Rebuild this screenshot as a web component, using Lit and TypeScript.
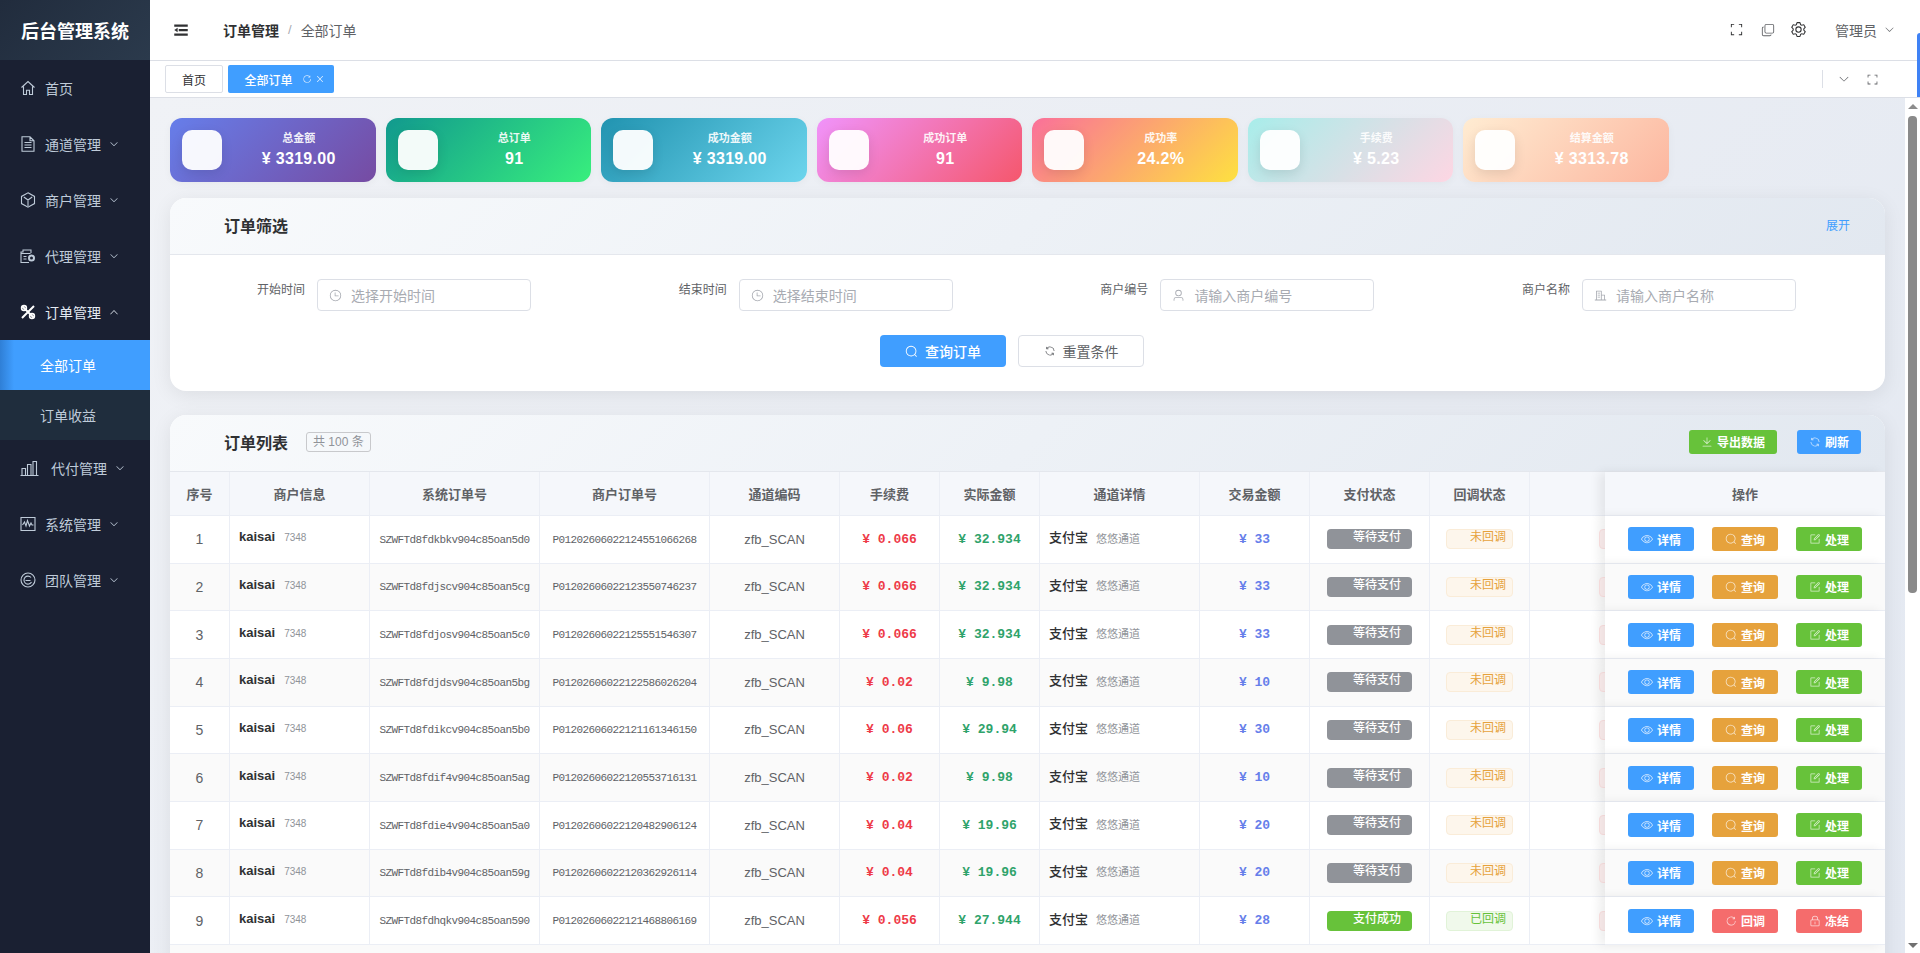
import { LitElement, html, css } from "lit";
import { customElement } from "lit/decorators.js";

const P = {
  down: "M831.872 340.864 512 652.672 192.128 340.864a30.592 30.592 0 0 0-42.752 0 29.12 29.12 0 0 0 0 41.6L489.664 714.24a32 32 0 0 0 44.672 0l340.288-331.712a29.12 29.12 0 0 0 0-41.728 30.592 30.592 0 0 0-42.752 0z",
  up: "m488.832 344.32-339.84 356.672a32 32 0 0 0 0 44.16l.384.384a29.44 29.44 0 0 0 42.688 0l320-335.872 319.872 335.872a29.44 29.44 0 0 0 42.688 0l.384-.384a32 32 0 0 0 0-44.16L535.168 344.32a32 32 0 0 0-46.336 0",
  search: "m795.904 750.72 124.992 124.928a32 32 0 0 1-45.248 45.248L750.656 795.904a416 416 0 1 1 45.248-45.248zM480 832a352 352 0 1 0 0-704 352 352 0 0 0 0 704",
  refresh: "M771.776 794.88A384 384 0 0 1 128 512h64a320 320 0 0 0 555.712 216.448H654.72a32 32 0 1 1 0-64h149.056a32 32 0 0 1 32 32v148.928a32 32 0 1 1-64 0v-50.56zM276.288 295.616h92.992a32 32 0 0 1 0 64H220.16a32 32 0 0 1-32-32V178.56a32 32 0 0 1 64 0v50.56A384 384 0 0 1 896.128 512h-64a320 320 0 0 0-555.776-216.384z",
  refreshRight: "M784.512 230.272v-50.56a32 32 0 1 1 64 0v149.056a32 32 0 0 1-32 32H667.52a32 32 0 1 1 0-64h92.992A320 320 0 1 0 524.8 833.152a320 320 0 0 0 320-320h64a384 384 0 0 1-384 384 384 384 0 0 1-384-384 384 384 0 0 1 643.712-282.88z",
  close: "M764.288 214.592 512 466.88 259.712 214.592a31.936 31.936 0 0 0-45.12 45.12L466.752 512 214.528 764.224a31.936 31.936 0 1 0 45.12 45.184L512 557.184l252.288 252.288a31.936 31.936 0 0 0 45.12-45.12L557.12 512.064l252.288-252.352a31.936 31.936 0 1 0-45.12-45.184z",
  clock: "M512 896a384 384 0 1 0 0-768 384 384 0 0 0 0 768m0 64a448 448 0 1 1 0-896 448 448 0 0 1 0 896M480 256a32 32 0 0 1 32 32v224h224q32 0 32 32t-32 32H480q-32 0-32-32V288a32 32 0 0 1 32-32",
  fold: "M896 192H128v128h768zm0 256H384v128h512zm0 256H128v128h768zM320 384 128 512l192 128z",
  gear: "M600.704 64a32 32 0 0 1 30.464 22.208l35.2 109.376c14.784 7.232 28.928 15.36 42.432 24.512l112.384-24.192a32 32 0 0 1 34.432 15.36L944.32 364.8a32 32 0 0 1-4.032 37.504l-77.12 85.12a357.12 357.12 0 0 1 0 49.024l77.12 85.248a32 32 0 0 1 4.032 37.504l-88.704 153.6a32 32 0 0 1-34.432 15.296L708.8 803.904c-13.44 9.088-27.648 17.28-42.368 24.512l-35.264 109.376A32 32 0 0 1 600.704 960H423.296a32 32 0 0 1-30.464-22.208L357.696 828.48a351.616 351.616 0 0 1-42.56-24.64l-112.32 24.256a32 32 0 0 1-34.432-15.36L79.68 659.2a32 32 0 0 1 4.032-37.504l77.12-85.248a357.12 357.12 0 0 1 0-48.896l-77.12-85.248A32 32 0 0 1 79.68 364.8l88.704-153.6a32 32 0 0 1 34.432-15.296l112.32 24.256c13.568-9.152 27.776-17.408 42.56-24.64l35.2-109.312A32 32 0 0 1 423.232 64H600.64zm-23.424 64H446.72l-36.352 113.088-24.512 11.968a294.113 294.113 0 0 0-34.816 20.096l-22.656 15.36-116.224-25.088-65.28 113.152 79.68 88.192-1.92 27.136a293.12 293.12 0 0 0 0 40.192l1.92 27.136-79.808 88.192 65.344 113.152 116.224-25.024 22.656 15.296a294.113 294.113 0 0 0 34.816 20.096l24.512 11.968L446.72 896h130.688l36.48-113.152 24.448-11.904a288.282 288.282 0 0 0 34.752-20.096l22.592-15.296 116.288 25.024 65.28-113.152-79.744-88.192 1.92-27.136a293.12 293.12 0 0 0 0-40.256l-1.92-27.136 79.808-88.128-65.344-113.152-116.288 24.96-22.592-15.232a287.616 287.616 0 0 0-34.752-20.096l-24.448-11.904L577.344 128zM512 320a192 192 0 1 1 0 384 192 192 0 0 1 0-384m0 64a128 128 0 1 0 0 256 128 128 0 0 0 0-256",
  view: "M512 160c320 0 512 352 512 352S832 864 512 864 0 512 0 512s192-352 512-352m0 64c-225.28 0-384.128 208.064-436.8 288 52.608 79.872 211.456 288 436.8 288 225.28 0 384.128-208.064 436.8-288-52.608-79.872-211.456-288-436.8-288zm0 64a224 224 0 1 1 0 448 224 224 0 0 1 0-448m0 64a160.192 160.192 0 0 0-160 160c0 88.192 71.744 160 160 160s160-71.808 160-160-71.744-160-160-160",
  lock: "M224 448a32 32 0 0 0-32 32v384a32 32 0 0 0 32 32h576a32 32 0 0 0 32-32V480a32 32 0 0 0-32-32zm0-64h576a96 96 0 0 1 96 96v384a96 96 0 0 1-96 96H224a96 96 0 0 1-96-96V480a96 96 0 0 1 96-96M512 544a32 32 0 0 1 32 32v192a32 32 0 1 1-64 0V576a32 32 0 0 1 32-32m192-160v-64a192 192 0 1 0-384 0v64zM512 64a256 256 0 0 1 256 256v128H256V320A256 256 0 0 1 512 64",
  edit: "M832 512a32 32 0 1 1 64 0v352a32 32 0 0 1-32 32H160a32 32 0 0 1-32-32V160a32 32 0 0 1 32-32h352a32 32 0 0 1 0 64H192v640h640zm-362.048 42.24 52.8-7.552L847.104 222.4a32 32 0 1 0-45.248-45.248L477.44 501.44l-7.552 52.8zm422.4-422.4a96 96 0 0 1 0 135.808l-331.84 331.84a32 32 0 0 1-18.112 9.088L436.8 623.68a32 32 0 0 1-36.224-36.224l15.104-105.6a32 32 0 0 1 9.024-18.112l331.904-331.84a96 96 0 0 1 135.744 0z",
  download: "M160 832h704a32 32 0 1 1 0 64H160a32 32 0 1 1 0-64m384-253.696 236.288-236.352 45.248 45.248L508.8 704 192 387.2l45.248-45.248L480 584.704V128h64z",
  user: "M512 512a192 192 0 1 0 0-384 192 192 0 0 0 0 384m0 64a256 256 0 1 1 0-512 256 256 0 0 1 0 512m320 320v-96a96 96 0 0 0-96-96H288a96 96 0 0 0-96 96v96a32 32 0 1 1-64 0v-96a160 160 0 0 1 160-160h448a160 160 0 0 1 160 160v96a32 32 0 1 1-64 0",
  corners: "M128 352V128h224v64H192v160zm544-224h224v224h-64V192H672zM128 672h64v160h160v64H128zm704 0h64v224H672v-64h160z",
  copy: "M768 832a128 128 0 0 1-128 128H192A128 128 0 0 1 64 832V384a128 128 0 0 1 128-128v64a64 64 0 0 0-64 64v448a64 64 0 0 0 64 64h448a64 64 0 0 0 64-64zM384 128a64 64 0 0 0-64 64v448a64 64 0 0 0 64 64h448a64 64 0 0 0 64-64V192a64 64 0 0 0-64-64zm0-64h448a128 128 0 0 1 128 128v448a128 128 0 0 1-128 128H384a128 128 0 0 1-128-128V192A128 128 0 0 1 384 64",
  office: "M192 128h384a32 32 0 0 1 32 32v736H160V160a32 32 0 0 1 32-32m32 64v640h320V192zm384 256h224a32 32 0 0 1 32 32v416H608v-64h192V512H608zM288 288h192v64H288zm0 160h192v64H288zm0 160h192v64H288zM64 832h896v64H64z",
};

const icon = (d: string, size = 12) =>
  html`<svg class="ic" style="width:${size}px;height:${size}px" viewBox="0 0 1024 1024"><path fill="currentColor" d=${d}></path></svg>`;

const sideIcons: Record<string, unknown> = {
  home: html`<svg class="si" viewBox="0 0 16 16"><path d="M1.5 7.5 8 1.5l6.5 6M3.5 6.5v8h3v-4.2h3v4.2h3v-8"></path></svg>`,
  doc: html`<svg class="si" viewBox="0 0 16 16"><path d="M2 .8h8l4 4v10.4H2zM10 .8v4h4M4.5 6.5h7M4.5 9h7M4.5 11.5h7"></path></svg>`,
  box: html`<svg class="si" viewBox="0 0 16 16"><path d="M8 .8l6.5 3.6v7.2L8 15.2l-6.5-3.6V4.400zM3.800 5 8 8l4.200-3M8 8v6"></path></svg>`,
  agent: html`<svg class="si" viewBox="0 0 16 16"><path d="M1 5.500h9.500M1 5.500v9h8M1 5.500V4h2V2h8v3M3.500 8.500h3M3.500 11h3"></path><circle cx="11.500" cy="10" r="2.500" stroke-width="2"></circle></svg>`,
  tools: html`<svg class="si bright" viewBox="0 0 16 16"><path d="M2 14 14 2M2.500 2.500l11 11" stroke-width="2"></path><circle cx="4" cy="4" r="2.400" stroke-width="1.600"></circle><circle cx="12" cy="12" r="2.400" stroke-width="1.600"></circle></svg>`,
  chart: html`<svg class="si wide" viewBox="0 0 19 16"><path d="M.500 15.500h18M2 15V8.500h3.500V15M7.500 15V4.500H11V15M13 15V1.500h3.500V15"></path></svg>`,
  wave: html`<svg class="si" viewBox="0 0 16 16"><path d="M1 1.500h14v13H1zM2.500 9l2-3 1.500 4 1.500-5.500L9.500 10l1.500-3 1 2h1.500"></path></svg>`,
  team: html`<svg class="si" viewBox="0 0 16 16"><circle cx="8" cy="8" r="7"></circle><path d="M11 5.500A4 4 0 1 0 11.500 10M5.500 8.500h5"></path></svg>`,
};

interface Row { sys: string; ord: string; fee: string; real: string; amt: string; paid?: boolean; }

const rows: Row[] = [
  { sys: "SZWFTd8fdkbkv904c85oan5d0", ord: "P01202606022124551066268", fee: "0.066", real: "32.934", amt: "33" },
  { sys: "SZWFTd8fdjscv904c85oan5cg", ord: "P01202606022123550746237", fee: "0.066", real: "32.934", amt: "33" },
  { sys: "SZWFTd8fdjosv904c85oan5c0", ord: "P01202606022125551546307", fee: "0.066", real: "32.934", amt: "33" },
  { sys: "SZWFTd8fdjdsv904c85oan5bg", ord: "P01202606022122586026204", fee: "0.02", real: "9.98", amt: "10" },
  { sys: "SZWFTd8fdikcv904c85oan5b0", ord: "P01202606022121161346150", fee: "0.06", real: "29.94", amt: "30" },
  { sys: "SZWFTd8fdif4v904c85oan5ag", ord: "P01202606022120553716131", fee: "0.02", real: "9.98", amt: "10" },
  { sys: "SZWFTd8fdie4v904c85oan5a0", ord: "P01202606022120482906124", fee: "0.04", real: "19.96", amt: "20" },
  { sys: "SZWFTd8fdib4v904c85oan59g", ord: "P01202606022120362926114", fee: "0.04", real: "19.96", amt: "20" },
  { sys: "SZWFTd8fdhqkv904c85oan590", ord: "P01202606022121468806169", fee: "0.056", real: "27.944", amt: "28", paid: true },
];

const stats = [
  ["总金额", "¥ 3319.00", "c1"], ["总订单", "91", "c2"], ["成功金额", "¥ 3319.00", "c3"], ["成功订单", "91", "c4"],
  ["成功率", "24.2%", "c5"], ["手续费", "¥ 5.23", "c6"], ["结算金额", "¥ 3313.78", "c7"],
];

const heads = ["序号", "商户信息", "系统订单号", "商户订单号", "通道编码", "手续费", "实际金额", "通道详情", "交易金额", "支付状态", "回调状态", ""];

@customElement("app-root")
export class AppRoot extends LitElement {
  static styles = css`
    :host {
      display: flex; height: 100vh; overflow: hidden; position: relative; background: #fff;
      font-family: "Liberation Sans", "Noto Sans CJK SC", sans-serif; color: #606266;
    }
    * { box-sizing: border-box; }
    .ic { display: block; flex: none; }
    .side { width: 150px; flex: none; background: #1a2032; color: #bfcbd9; font-size: 14px; }
    .logo { height: 60px; display: flex; align-items: center; justify-content: center; color: #fff; font-size: 18px; font-weight: 700; background: linear-gradient(135deg, #212c3d, #2b3a4c); }
    .mi { height: 56px; display: flex; align-items: center; padding-left: 20px; }
    .mi.open { color: #e4eaf2; }
    .mi .txt { margin-left: 9px; flex: none; width: 64px; }
    .mi .arrow { margin-left: 10px; }
    .si { width: 16px; height: 16px; flex: none; fill: none; stroke: currentColor; stroke-width: 1.1; }
    .si.bright { color: #fff; }
    .si.wide { width: 19px; margin-right: 3px; }
    .sub { height: 50px; display: flex; align-items: center; padding-left: 40px; background: #1f2d3d; }
    .sub.on { color: #fff; background: linear-gradient(90deg, #2f7fd6, #409eff 14px); }
    .right { flex: 1; min-width: 0; display: flex; flex-direction: column; }
    .top { height: 61px; flex: none; border-bottom: 1px solid #dcdfe6; display: flex; align-items: center; padding: 0 25px 1px 22px; color: #303133; }
    .crumb { margin-left: 33px; font-size: 14px; font-weight: 700; }
    .sep { margin: 0 9px; color: #a8abb2; font-size: 13px; }
    .crumb2 { font-size: 14px; color: #606266; }
    .tools { margin-left: auto; display: flex; align-items: center; }
    .tools .copy { margin-left: 17px; color: #606266; }
    .tools .gear { margin-left: 15px; }
    .who { margin-left: 28px; font-size: 14px; color: #606266; }
    .tools .chev { margin-left: 7px; color: #606266; }
    .tabs { height: 37px; flex: none; border-bottom: 1px solid #dcdfe6; display: flex; align-items: center; padding: 0 41px 0 15px; gap: 5px; }
    .tab { height: 28px; display: flex; align-items: center; justify-content: center; font-size: 12px; border-radius: 2px; }
    .tab.plain { width: 58px; border: 1px solid #dcdfe6; color: #303133; }
    .tab.act { width: 106px; background: #409eff; color: #fff; font-weight: 500; padding-left: 7px; }
    .tab.act .r { margin-left: 9px; opacity: .8; }
    .tab.act .x { margin-left: 3px; opacity: .9; }
    .tabr { margin-left: auto; display: flex; align-items: center; color: #606266; }
    .tabr .div { width: 1px; height: 18px; background: #dcdfe6; margin-right: 15px; }
    .tabr .fs { margin-left: 16px; }
    .body { flex: 1; min-height: 0; display: flex; }
    .main { flex: 1; min-width: 0; overflow: hidden; padding: 20px; background: linear-gradient(135deg, #f0f2f6, #e3e8f1); }
    .bar { width: 15px; flex: none; background: #fff; display: flex; flex-direction: column; align-items: center; padding: 6px 0 5px; }
    .tri { width: 0; height: 0; border-left: 5px solid transparent; border-right: 5px solid transparent; }
    .tri.u { border-bottom: 5px solid #8c8c8c; }
    .tri.d { border-top: 5px solid #707070; margin-top: auto; }
    .thumb { width: 9px; height: 477px; border-radius: 4px; background: #8a8a8a; margin-top: 7px; }
    .stats { display: flex; gap: 10px; margin-bottom: 16px; }
    .card { width: 205.5px; height: 64px; border-radius: 12px; display: flex; align-items: center; padding: 0 12px; color: #fff; gap: 12px; box-shadow: 0 2px 8px rgba(0,0,0,.04); }
    .c1 { background: linear-gradient(135deg, #667eea, #764ba2); }
    .c2 { background: linear-gradient(135deg, #11998e, #38ef7d); }
    .c3 { background: linear-gradient(135deg, #2193b0, #6dd5ed); }
    .c4 { background: linear-gradient(135deg, #f093fb, #f5576c); }
    .c5 { background: linear-gradient(135deg, #fa709a, #fee140); }
    .c6 { background: linear-gradient(135deg, #a8edea, #fed6e3); }
    .c7 { background: linear-gradient(135deg, #ffecd2, #fcb69f); }
    .sq { width: 40px; height: 40px; flex: none; border-radius: 10px; background: rgba(255,255,255,.95); box-shadow: 0 4px 12px rgba(0,0,0,.1); }
    .cc { flex: 1; text-align: center; }
    .cl { font-size: 11px; font-weight: 700; opacity: .9; line-height: 15px; margin-bottom: 2px; }
    .cv { font-size: 16px; font-weight: 700; letter-spacing: .3px; line-height: 22px; }
    .panel { background: #fff; border-radius: 16px; overflow: hidden; box-shadow: 0 4px 20px rgba(0,0,0,.08); margin-bottom: 24px; }
    .ph { height: 57px; border-bottom: 1px solid #e4e7ed; display: flex; align-items: center; padding: 0 35px 3px 54px; background: linear-gradient(135deg, #f8fafc, #e2e8f0); }
    .pt { font-size: 16px; font-weight: 700; color: #303133; }
    .more { margin-left: auto; font-size: 12px; color: #409eff; }
    .form { display: grid; grid-template-columns: repeat(4, 421.700px); padding: 24px 0 0 35px; }
    .fi { display: flex; }
    .fl { width: 100px; text-align: right; font-size: 12px; line-height: 22px; color: #606266; margin-right: 12px; }
    .inp { width: 214px; height: 32px; border: 1px solid #dcdfe6; border-radius: 4px; display: flex; align-items: center; padding-left: 11px; color: #a8abb2; font-size: 14px; gap: 9px; }
    .acts { display: flex; justify-content: center; gap: 12px; padding: 24px 31px 24px 0; }
    .btn { width: 126px; height: 32px; border-radius: 4px; display: flex; align-items: center; justify-content: center; gap: 7px; font-size: 14px; }
    .btn.pri { background: #409eff; color: #fff; font-weight: 500; }
    .btn.def { border: 1px solid #dcdfe6; color: #606266; }
    .count { margin-left: 18px; height: 20px; border: 1px solid #c8c9cc; border-radius: 3px; font-size: 12px; color: #909399; padding: 0 6px; line-height: 18px; }
    .hbtns { margin-left: auto; display: flex; gap: 20px; }
    .list .ph { padding-right: 24px; }
    .sb { height: 24px; padding: 0 12px; border-radius: 3px; color: #fff; font-size: 12px; font-weight: 700; display: flex; align-items: center; gap: 4px; }
    .sb .ic { opacity: .75; }
    .sb.g { background: #67c23a; } .sb.b { background: #409eff; } .sb.o { background: #e6a23c; } .sb.r { background: #f56c6c; }
    .op .sb { padding: 0 13px; }
    .tr { display: grid; grid-template-columns: 60px 140px 170px 170px 130px 100px 100px 160px 110px 120px 100px 75px 280px; height: 47.670px; }
    .tr.even { background: #fafafa; }
    .tr.hd { height: 44px; background: #f5f7fb; font-size: 13px; font-weight: 700; color: #606266; }
    .td { border-right: 1px solid #ebeef5; border-bottom: 1px solid #ebeef5; display: flex; align-items: center; justify-content: center; min-width: 0; overflow: hidden; font-size: 13px; white-space: nowrap; }
    .seq { font-size: 14px; }
    .l { justify-content: flex-start; padding: 0 0 5px 9px; }
    .name { font-weight: 700; color: #303133; }
    .num { font-size: 10px; color: #909399; margin-left: 9px; margin-top: 2px; }
    .mono { font-family: "Liberation Mono", monospace; }
    .no { font-size: 11px; letter-spacing: -.6px; color: #606266; padding-top: 1px; }
    .money { font-size: 13px; font-weight: 700; }
    .red { color: #ee3a48; } .green { color: #2fa36b; } .blue { color: #667eea; }
    .ch { color: #303133; font-weight: 500; }
    .ch2 { font-size: 11px; color: #909399; margin-left: 8px; margin-top: 2px; }
    .tag { height: 20px; border-radius: 4px; font-size: 12px; line-height: 15px; border: 1px solid transparent; }
    .pay { width: 85px; padding-left: 25px; color: #fff; font-weight: 500; }
    .pay.wait { background: #909399; } .pay.ok { background: #67c23a; }
    .cb { width: 67px; padding-left: 23px; }
    .cb.wait { background: #fdf6ec; border-color: #faecd8; color: #e6a23c; }
    .cb.ok { background: #f0f9eb; border-color: #e1f3d8; color: #67c23a; }
    .hid { justify-content: flex-start; border: 0; border-bottom: 1px solid #ebeef5; padding-left: 69px; }
    .pink { width: 40px; flex: none; background: #fef0f0; border-color: #fde2e2; }
    .op { position: relative; z-index: 1; border-right: 0; gap: 18px; background: inherit; box-shadow: -6px 0 10px rgba(0,0,0,.07); }
    .hd .op { background: #f5f7fb; }
    .tr:not(.even):not(.hd) .op { background: #fff; }
    .tr.even .op { background: #fafafa; }
    .edge { position: absolute; top: 33px; right: 0; width: 3px; height: 64px; background: #3f82f5; border-top-left-radius: 3px; }
  `;

  private payTag(r: Row) {
    return html`<div class="tag pay ${r.paid ? "ok" : "wait"}">${r.paid ? "支付成功" : "等待支付"}</div>`;
  }

  private row(r: Row, i: number) {
    return html`<div class="tr ${i % 2 ? "even" : ""}">
      <div class="td seq">${i + 1}</div>
      <div class="td l"><span class="name">kaisai</span><span class="num">7348</span></div>
      <div class="td mono no">${r.sys}</div>
      <div class="td mono no">${r.ord}</div>
      <div class="td">zfb_SCAN</div>
      <div class="td mono money red">¥ ${r.fee}</div>
      <div class="td mono money green">¥ ${r.real}</div>
      <div class="td l"><span class="ch">支付宝</span><span class="ch2">悠悠通道</span></div>
      <div class="td mono money blue">¥ ${r.amt}</div>
      <div class="td">${this.payTag(r)}</div>
      <div class="td"><div class="tag cb ${r.paid ? "ok" : "wait"}">${r.paid ? "已回调" : "未回调"}</div></div>
      <div class="td hid"><div class="tag pink"></div></div>
      <div class="td op">
        <div class="sb b">${icon(P.view)}详情</div>
        ${r.paid
          ? html`<div class="sb r">${icon(P.refreshRight)}回调</div><div class="sb r">${icon(P.lock)}冻结</div>`
          : html`<div class="sb o">${icon(P.search)}查询</div><div class="sb g">${icon(P.edit)}处理</div>`}
      </div>
    </div>`;
  }

  private menu(ic: string, label: string, cls = "") {
    return html`<div class="mi ${cls}">${sideIcons[ic]}<span class="txt">${label}</span>${icon(cls === "open" ? P.up : P.down, 10)}</div>`;
  }

  private field(label: string, ph: string, d: string) {
    return html`<div class="fi"><div class="fl">${label}</div><div class="inp">${icon(d, 13)}<span>${ph}</span></div></div>`;
  }

  render() {
    return html`
      <aside class="side">
        <div class="logo">后台管理系统</div>
        <div class="mi">${sideIcons.home}<span class="txt">首页</span></div>
        ${this.menu("doc", "通道管理")}
        ${this.menu("box", "商户管理")}
        ${this.menu("agent", "代理管理")}
        ${this.menu("tools", "订单管理", "open")}
        <div class="sub on">全部订单</div>
        <div class="sub">订单收益</div>
        ${this.menu("chart", "代付管理")}
        ${this.menu("wave", "系统管理")}
        ${this.menu("team", "团队管理")}
      </aside>
      <div class="right">
        <header class="top">
          ${icon(P.fold, 18)}
          <span class="crumb">订单管理</span><span class="sep">/</span><span class="crumb2">全部订单</span>
          <div class="tools">
            ${icon(P.corners, 15)}
            <span class="copy">${icon(P.copy, 14)}</span>
            <span class="gear">${icon(P.gear, 17)}</span>
            <span class="who">管理员</span>
            <span class="chev">${icon(P.down, 11)}</span>
          </div>
        </header>
        <nav class="tabs">
          <div class="tab plain">首页</div>
          <div class="tab act">全部订单<span class="r">${icon(P.refreshRight, 10)}</span><span class="x">${icon(P.close, 10)}</span></div>
          <div class="tabr"><span class="div"></span>${icon(P.down, 12)}<span class="fs">${icon(P.corners, 13)}</span></div>
        </nav>
        <div class="body">
          <main class="main">
            <section class="stats">
              ${stats.map(([l, v, c]) => html`<div class="card ${c}"><div class="sq"></div><div class="cc"><div class="cl">${l}</div><div class="cv">${v}</div></div></div>`)}
            </section>
            <section class="panel">
              <div class="ph"><span class="pt">订单筛选</span><span class="more">展开</span></div>
              <div class="form">
                ${this.field("开始时间", "选择开始时间", P.clock)}
                ${this.field("结束时间", "选择结束时间", P.clock)}
                ${this.field("商户编号", "请输入商户编号", P.user)}
                ${this.field("商户名称", "请输入商户名称", P.office)}
              </div>
              <div class="acts">
                <div class="btn pri">${icon(P.search, 13)}查询订单</div>
                <div class="btn def">${icon(P.refresh, 12)}重置条件</div>
              </div>
            </section>
            <section class="panel list">
              <div class="ph">
                <span class="pt">订单列表</span><span class="count">共 100 条</span>
                <div class="hbtns">
                  <div class="sb g">${icon(P.download)}导出数据</div>
                  <div class="sb b">${icon(P.refresh)}刷新</div>
                </div>
              </div>
              <div class="tr hd">
                ${heads.map((h, i) => html`<div class="td ${i === 11 ? "hid" : ""}">${h}</div>`)}
                <div class="td op">操作</div>
              </div>
              ${rows.map((r, i) => this.row(r, i))}
              <div class="tr even"></div>
            </section>
          </main>
          <div class="bar"><span class="tri u"></span><span class="thumb"></span><span class="tri d"></span></div>
        </div>
      </div>
      <span class="edge"></span>
    `;
  }
}
